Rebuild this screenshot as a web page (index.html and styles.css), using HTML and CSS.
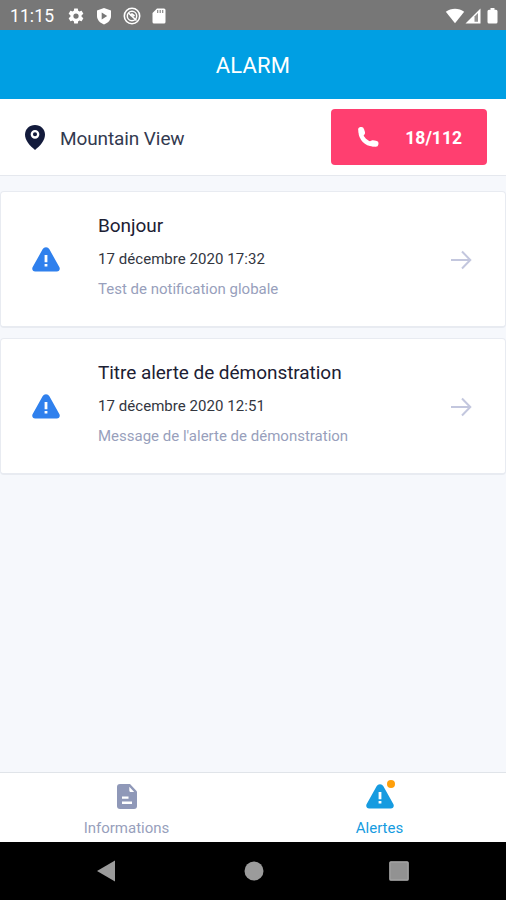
FILE: index.html
```html
<!DOCTYPE html>
<html lang="fr">
<head>
<meta charset="utf-8">
<title>ALARM</title>
<link rel="stylesheet" href="styles.css">
</head>
<body>
<svg class="defs" width="0" height="0">
  <symbol id="warn" viewBox="0 0 28 25">
    <path fill="currentColor" d="M14 .3c1.500 0 2.600.7 3.400 2l9.900 17.800c1.200 2.200 0 4.400-2.500 4.400H3.200C.7 24.500-.5 22.300.7 20.100L10.600 2.300C11.400 1 12.500.3 14 .3z"/>
    <path fill="#fff" d="M12.600 8h2.800v7.200h-2.800zM12.600 17h2.800v2.500h-2.800z"/>
  </symbol>
  <symbol id="arrow" viewBox="0 0 22 20">
    <path fill="none" stroke="currentColor" stroke-width="2" d="M1 10h19M12 1.500l8.300 8.500-8.300 8.500"/>
  </symbol>
</svg>
<div class="screen">
  <div class="status">
    <span class="clock">11:15</span>
    <div class="status-icons">
      <svg width="18" height="18" viewBox="0 0 24 24"><path fill="#fff" d="M19.430 12.980c.04-.32.070-.64.070-.98s-.03-.66-.07-.98l2.110-1.650c.19-.15.24-.42.120-.64l-2-3.460c-.12-.22-.39-.3-.61-.22l-2.490 1c-.52-.4-1.080-.73-1.690-.98l-.38-2.650A.488.488 0 0 0 14 2h-4c-.25 0-.46.180-.49.420l-.38 2.650c-.61.250-1.170.59-1.690.98l-2.490-1c-.23-.09-.49 0-.61.220l-2 3.460c-.13.220-.07.490.12.640l2.110 1.650c-.04.320-.07.650-.07.980s.03.660.07.980l-2.110 1.650c-.19.150-.24.420-.12.640l2 3.460c.12.220.39.300.61.220l2.490-1c.52.400 1.080.730 1.690.980l.38 2.650c.03.240.24.420.49.420h4c.25 0 .46-.18.490-.42l.38-2.650c.61-.25 1.170-.59 1.690-.98l2.490 1c.23.090.49 0 .61-.22l2-3.460c.12-.22.070-.49-.12-.64zM12 15.500a3.500 3.500 0 1 1 0-7 3.500 3.500 0 0 1 0 7z"/></svg>
      <svg width="16" height="18" viewBox="0 0 16 18"><path fill="#fff" d="M8 1l7 2.600V9c0 4-3 7-7 8.500C4 16 1 13 1 9V3.600z"/><path fill="#777" d="M5.700 5.500l5.500 3.500-5.500 3.500z"/></svg>
      <svg width="18" height="18" viewBox="0 0 18 18"><g fill="none" stroke="#fff"><circle cx="9" cy="9" r="7.700" stroke-width="1.600"/><circle cx="9" cy="9" r="4.700" stroke-width="1.500"/><path stroke-width="1.700" d="M5.500 6l8 7.500M7 8.500l2-1.500 2.500 2"/></g></svg>
      <svg width="14" height="18" viewBox="0 0 14 18"><path fill="#fff" d="M5 1.500h7a1.500 1.500 0 0 1 1.500 1.500v12a1.500 1.500 0 0 1-1.500 1.500H2A1.500 1.500 0 0 1 .5 15V6z"/><path stroke="#888" stroke-width="1.200" d="M5.700 3v3M8.200 3v3M10.700 3v3"/></svg>
    </div>
    <div class="status-right">
      <svg width="20" height="16" viewBox="0 0 20 16"><path fill="#fff" d="M.8 3.700C6-.3 14-.3 19.200 3.700L10 15.300z"/></svg>
      <svg width="16" height="16" viewBox="0 0 16 16"><path fill="#fff" d="M15.500.5v15H.5z"/><path fill="#777" d="M9.500 8.500v5.300h3.500V5z" opacity=".8"/></svg>
      <svg width="11" height="16" viewBox="0 0 11 16"><path fill="#fff" d="M3.500 0h4v1.700H9a1.500 1.500 0 0 1 1.500 1.500V14A1.500 1.500 0 0 1 9 15.500H2A1.500 1.500 0 0 1 .5 14V3.200A1.500 1.500 0 0 1 2 1.700h1.500z"/></svg>
    </div>
  </div>
  <header class="header"><h1>ALARM</h1></header>
  <div class="place">
    <svg class="pin" width="20" height="25" viewBox="0 0 20 25"><path fill="#131b3c" d="M10 0c5.600 0 10 4.200 10 9.600 0 6-5 11.500-10 15.400C5 21.100 0 15.600 0 9.600 0 4.200 4.400 0 10 0z"/><circle cx="10" cy="9.300" r="3.200" fill="#131b3c" stroke="#fff" stroke-width="2.300"/></svg>
    <span class="place-name">Mountain View</span>
    <button class="call">
      <svg width="22" height="22" viewBox="0 0 22 22"><path fill="none" stroke="#fff" stroke-width="4.500" stroke-linecap="round" d="M3.700 6C4 12.500 9 17.700 16 18.300"/><path fill="none" stroke="#fff" stroke-width="6" stroke-linecap="round" stroke-linejoin="round" d="M4.200 4l.8 2.700M15.500 17.300l3 .5"/></svg>
      <span>18/112</span>
    </button>
  </div>
  <main class="list">
    <article class="card">
      <svg class="warn" width="28" height="25"><use href="#warn"/></svg>
      <div class="text">
        <h2>Bonjour</h2>
        <p class="date">17 décembre 2020 17:32</p>
        <p class="msg">Test de notification globale</p>
      </div>
      <svg class="arrow" width="22" height="20"><use href="#arrow"/></svg>
    </article>
    <article class="card">
      <svg class="warn" width="28" height="25"><use href="#warn"/></svg>
      <div class="text">
        <h2>Titre alerte de démonstration</h2>
        <p class="date">17 décembre 2020 12:51</p>
        <p class="msg">Message de l'alerte de démonstration</p>
      </div>
      <svg class="arrow" width="22" height="20"><use href="#arrow"/></svg>
    </article>
  </main>
  <nav class="tabs">
    <a class="tab">
      <span class="tab-icon"><svg width="20" height="25" viewBox="0 0 20 25"><path fill="#8f98b8" d="M3 0h10l7 7.500V22a3 3 0 0 1-3 3H3a3 3 0 0 1-3-3V3a3 3 0 0 1 3-3z"/><path fill="#fff" d="M12.300 2.800v3.400c0 1.200.7 1.900 1.900 1.900h3zM5 12.500h6.500v2.300H5zM5 17.600h10v2.400H5z"/></svg></span>
      <span>Informations</span>
    </a>
    <a class="tab active">
      <span class="tab-icon"><svg width="28" height="25"><use href="#warn"/></svg><i class="dot"></i></span>
      <span>Alertes</span>
    </a>
  </nav>
  <div class="system">
    <svg width="18" height="22" viewBox="0 0 18 22"><path fill="#9b9b9b" d="M18 .5v21L0 11z"/></svg>
    <svg class="home" width="20" height="20" viewBox="0 0 20 20"><circle cx="10" cy="10" r="9.500" fill="#9b9b9b"/></svg>
    <svg width="20" height="20" viewBox="0 0 20 20"><rect x=".8" y=".8" width="18.400" height="18.400" rx="1" fill="#929292" stroke="#aaa" stroke-width="1.200"/></svg>
  </div>
</div>
</body>
</html>
```
FILE: styles.css
```css
* { box-sizing: border-box; }
body { margin: 0; font-family: Roboto, "Liberation Sans", sans-serif; }
h1, h2, p { margin: 0; font-weight: 400; }
svg { display: block; flex: none; }
.defs { position: absolute; }
.screen { display: flex; flex-direction: column; width: 506px; height: 900px; background: #f6f8fc; }
.status { display: flex; align-items: center; height: 30px; padding: 1px 8px 0 10px; background: #777; color: #fff; }
.clock { width: 57px; font-size: 17.500px; letter-spacing: .1px; }
.status-icons { display: flex; align-items: center; gap: 11px; }
.status-right { display: flex; gap: 0; margin-left: auto; }
.status-right svg:last-child { margin-left: 6px; }
.header { display: flex; align-items: center; justify-content: center; height: 69px; padding-top: 2px; background: #009fe3; color: #fff; }
.header h1 { font-size: 22px; letter-spacing: .2px; }
.place { display: flex; align-items: center; height: 77px; padding: 0 19px 0 25px; background: #fff; border-bottom: 1px solid #e5e8ee; }
.place-name { margin-left: 15px; padding-top: 2px; font-size: 19px; letter-spacing: -.1px; color: #333a50; }
.call { display: flex; align-items: center; justify-content: space-between; width: 156px; height: 56px; margin-left: auto; padding: 0 25px 0 26px; border: 0; border-radius: 4px; background: #ff3f70; color: #fff; font: 700 17.500px Roboto, sans-serif; letter-spacing: 0; }
.call span { padding-top: 2px; }
.list { display: flex; flex: 1; flex-direction: column; gap: 10px; padding-top: 15px; }
.card { display: flex; height: 137px; padding: 0 33px 0 31px; background: #fff; border: 1px solid #e8ebf1; border-width: 1px 1px 2px; border-radius: 4px; }
.warn { align-self: center; color: #2f80ed; }
.text { margin-left: 38px; padding-top: 21px; white-space: nowrap; }
.text h2 { font-size: 19px; line-height: 26px; letter-spacing: -.05px; color: #1c2033; }
.date { margin-top: 9px; font-size: 15px; line-height: 22px; letter-spacing: .05px; color: #33363f; }
.msg { margin-top: 8px; font-size: 15px; line-height: 22px; letter-spacing: 0; color: #989fbc; }
.arrow { align-self: center; margin: 2px 0 0 auto; color: #c3c7de; }
.tabs { display: flex; height: 70px; background: #fff; border-top: 1px solid #e0e4e9; }
.tab { display: flex; flex: 1; flex-direction: column; align-items: center; padding-top: 11px; font-size: 15px; line-height: 20px; color: #989fbc; }
.tab-icon { position: relative; margin-bottom: 9px; }
.active { color: #169be0; }
.dot { position: absolute; top: -4px; right: -1px; width: 8px; height: 8px; border-radius: 50%; background: #ff9f0a; }
.system { display: flex; align-items: center; justify-content: space-between; height: 58px; padding: 0 97px; background: #000; }
.home { margin-left: 3px; }
```
